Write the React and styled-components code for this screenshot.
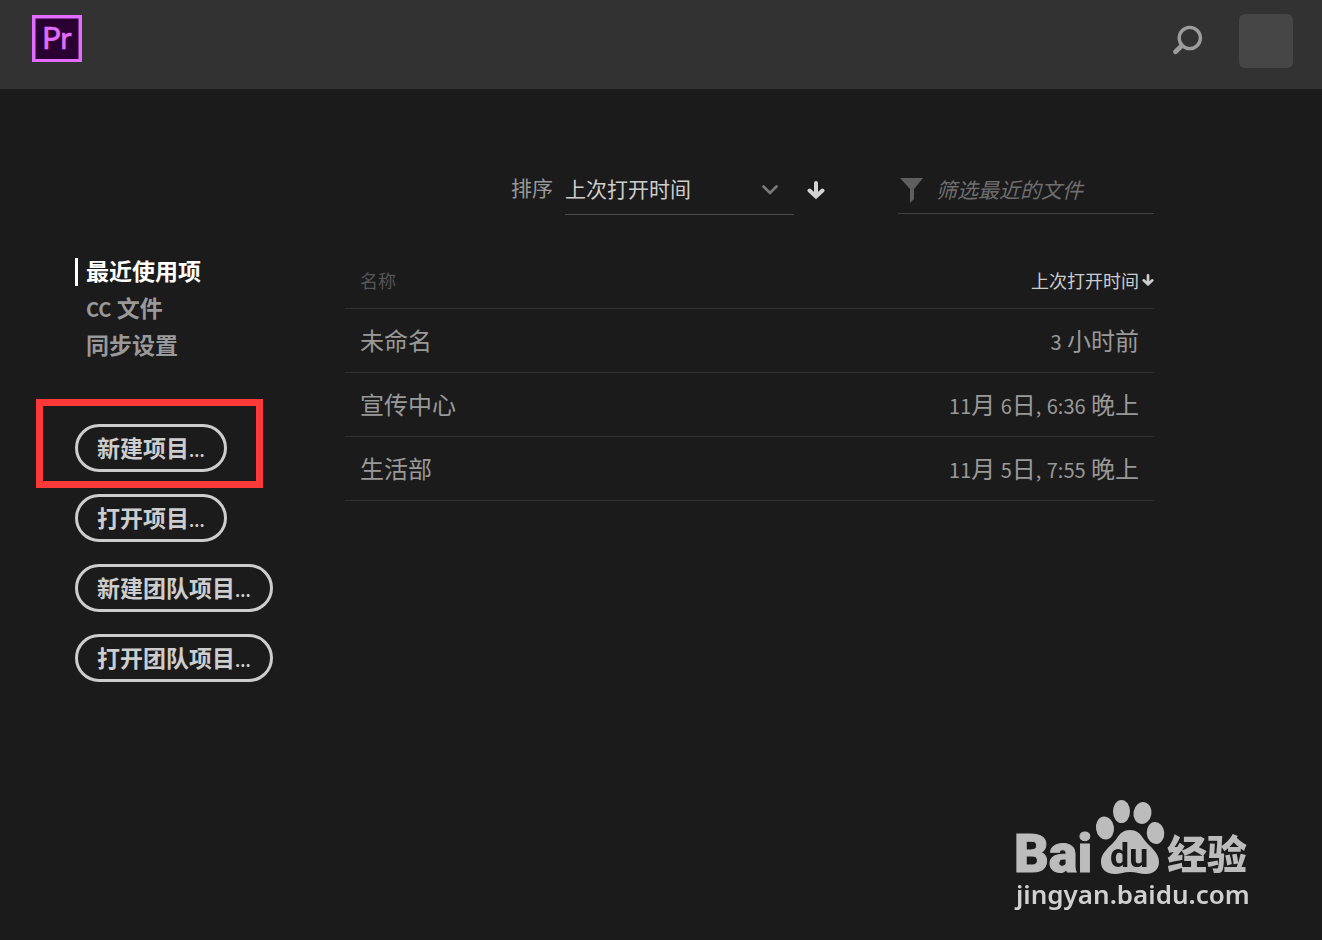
import { useState } from "react";
import styled, { createGlobalStyle, css } from "styled-components";

const recentFiles = [
  { name: "未命名", opened: "3 小时前" },
  { name: "宣传中心", opened: "11月 6日, 6:36 晚上" },
  { name: "生活部", opened: "11月 5日, 7:55 晚上" },
];

const navItems = ["最近使用项", "CC 文件", "同步设置"];

const actions = [
  { label: "新建项目", marked: true },
  { label: "打开项目" },
  { label: "新建团队项目" },
  { label: "打开团队项目" },
];

function ArrowDown({ size }) {
  return (
    <svg width={size} height={size} viewBox="0 0 18 18" aria-hidden="true">
      <path
        d="M9 2v13M2.5 9.5L9 15.5l6.5-6"
        fill="none"
        stroke="currentColor"
        strokeWidth="4"
        strokeLinecap="round"
      />
    </svg>
  );
}

// digits and latin letters are set a bit smaller than the hanzi
function MixedText({ children }) {
  return (
    <span>
      {children
        .split(/([0-9A-Z:,]+)/)
        .map((part, i) => (i % 2 ? <Latin key={i}>{part}</Latin> : part))}
    </span>
  );
}

function Watermark() {
  return (
    <WatermarkBox>
      <svg width="240" height="86" viewBox="-4 0 240 86" role="img">
        <g fill="#bcbcbc">
          <ellipse cx="89" cy="28" rx="9" ry="11.5" transform="rotate(-8 89 28)" />
          <ellipse cx="105.5" cy="11.5" rx="8.5" ry="11.5" />
          <ellipse cx="126.5" cy="13" rx="9" ry="11" transform="rotate(10 126.5 13)" />
          <ellipse cx="139.5" cy="33" rx="8.8" ry="11" transform="rotate(-5 139.5 33)" />
          <path d="M114 30c6 0 10 3 13 8 4 7 16 13 16 24 0 8-6 12-13 12-6 0-10-2-16-2s-10 2-15 2c-8 0-14-4-14-12 0-11 12-17 16-24 3-5 7-8 13-8z" />
          <BaiText x="-2" y="72">
            Bai
          </BaiText>
          <HanziText x="151" y="69">
            经验
          </HanziText>
        </g>
        <DuText x="94" y="67">
          du
        </DuText>
      </svg>
      <SiteName>jingyan.baidu.com</SiteName>
    </WatermarkBox>
  );
}

export default function App() {
  const [current, setCurrent] = useState(navItems[0]);
  const [filter, setFilter] = useState("");

  const files = recentFiles.filter((file) => file.name.includes(filter));

  return (
    <>
      <GlobalStyle />
      <Header>
        <svg width="50" height="47" viewBox="0 0 50 47" role="img">
          <rect width="50" height="47" fill="#e26cff" />
          <rect x="3.5" y="3.5" width="43" height="40.5" fill="#2a0033" />
          <LogoText x="10" y="34">
            Pr
          </LogoText>
        </svg>
        <HeaderTools>
          <IconButton type="button" aria-label="搜索" $color="#9d9d9d">
            <svg width="32" height="32" viewBox="0 0 32 32">
              <circle cx="17.8" cy="13" r="10.6" fill="none" stroke="currentColor" strokeWidth="3.4" />
              <path d="M9.5 21l-6 5.8" stroke="currentColor" strokeWidth="4.8" strokeLinecap="round" />
            </svg>
          </IconButton>
          <Avatar type="button" aria-label="帐户" />
        </HeaderTools>
      </Header>
      <Main>
        <Sidebar>
          <nav>
            {navItems.map((item) => (
              <NavLink
                key={item}
                href="#"
                $active={item === current}
                onClick={() => setCurrent(item)}
              >
                <MixedText>{item}</MixedText>
              </NavLink>
            ))}
          </nav>
          <Actions>
            {actions.map(({ label, marked }) => (
              <ActionItem key={label} $marked={marked}>
                <ActionButton type="button">
                  {label}
                  <Dots>...</Dots>
                </ActionButton>
              </ActionItem>
            ))}
          </Actions>
        </Sidebar>
        <section>
          <Toolbar>
            <SortGroup>
              <SortLabel htmlFor="sort">排序</SortLabel>
              <SelectWrapper>
                <Select id="sort">
                  <option>上次打开时间</option>
                </Select>
                <Chevron width="16" height="10" viewBox="0 0 16 10">
                  <path
                    d="M1.5 1.5L8 8l6.5-6.5"
                    fill="none"
                    stroke="currentColor"
                    strokeWidth="2.6"
                    strokeLinecap="round"
                  />
                </Chevron>
              </SelectWrapper>
              <SortButton type="button" aria-label="降序" $color="#d3d3d3">
                <ArrowDown size={18} />
              </SortButton>
            </SortGroup>
            <FilterField>
              <svg width="26" height="28" viewBox="0 0 26 28" aria-hidden="true">
                <path d="M2 3h23L16 14v10l-4 4V14z" fill="#5f5f5f" />
              </svg>
              <FilterInput
                type="text"
                aria-label="筛选最近的文件"
                placeholder="筛选最近的文件"
                value={filter}
                onChange={(e) => setFilter(e.target.value)}
              />
            </FilterField>
          </Toolbar>
          <Table>
            <thead>
              <tr>
                <HeadCell>名称</HeadCell>
                <HeadCell $sorted>
                  <SortedBy>
                    上次打开时间
                    <ArrowDown size={12} />
                  </SortedBy>
                </HeadCell>
              </tr>
            </thead>
            <tbody>
              {files.map((file) => (
                <tr key={file.name}>
                  <Cell>{file.name}</Cell>
                  <Cell $right>
                    <MixedText>{file.opened}</MixedText>
                  </Cell>
                </tr>
              ))}
            </tbody>
          </Table>
        </section>
      </Main>
      <Watermark />
    </>
  );
}

const GlobalStyle = createGlobalStyle`
  * {
    box-sizing: border-box;
  }
  body {
    margin: 0;
    min-height: 100vh;
    background: #1b1b1b;
    color: #999;
    font-family: "Noto Sans CJK SC", "Noto Sans", sans-serif;
  }
  button, input, select {
    font-family: inherit;
  }
`;

const Header = styled.header`
  display: flex;
  align-items: flex-start;
  justify-content: space-between;
  height: 89px;
  padding: 14px 29px 0 32px;
  background: #323232;

  > svg {
    margin-top: 1px;
  }
`;

const LogoText = styled.text`
  fill: #e26cff;
  stroke: #e26cff;
  stroke-width: 0.6;
  font-family: Lato, sans-serif;
  font-size: 31px;
`;

const HeaderTools = styled.div`
  display: flex;
  align-items: center;
  gap: 35px;
`;

const IconButton = styled.button`
  display: inline-flex;
  padding: 0;
  border: none;
  background: none;
  color: ${({ $color }) => $color};
  cursor: pointer;
`;

const SortButton = styled(IconButton)`
  padding: 0 1px;
`;

const Avatar = styled.button`
  width: 54px;
  height: 54px;
  border: none;
  border-radius: 6px;
  background: #464646;
`;

const Main = styled.main`
  display: grid;
  grid-template-columns: 270px 1fr;
  padding: 76px 168px 0 75px;
`;

const Sidebar = styled.aside`
  padding-top: 88px;
`;

const NavLink = styled.a`
  display: flex;
  align-items: center;
  gap: 8px;
  height: 37px;
  padding-bottom: 3px;
  color: ${({ $active }) => ($active ? "#fff" : "#999")};
  font-size: 23px;
  font-weight: 700;
  line-height: 34px;
  text-decoration: none;

  &::before {
    content: "";
    width: 3px;
    height: 28px;
    margin-top: 3px;
    background: ${({ $active }) => ($active ? "#fff" : "transparent")};
  }
`;

const Actions = styled.ul`
  display: flex;
  flex-direction: column;
  align-items: flex-start;
  gap: 22px;
  margin: 60px 0 0;
  padding: 0;
  list-style: none;
`;

const ActionItem = styled.li`
  position: relative;

  ${({ $marked }) =>
    $marked &&
    css`
      &::after {
        content: "";
        position: absolute;
        inset: -25px -36px -16px -39px;
        border: 7px solid #fc3838;
        pointer-events: none;
      }
    `}
`;

const ActionButton = styled.button`
  display: block;
  height: 48px;
  padding: 0 19px;
  border: 3px solid #cdcdcd;
  border-radius: 24px;
  background: none;
  color: #cdcdcd;
  font-size: 23px;
  font-weight: 700;
  line-height: 38px;
  cursor: pointer;
`;

const Dots = styled.span`
  font-size: 16px;
`;

const Toolbar = styled.div`
  display: flex;
  justify-content: flex-end;
  gap: 72px;
  height: 50px;
`;

const SortGroup = styled.div`
  display: flex;
  align-items: center;
  gap: 12px;
`;

const SortLabel = styled.label`
  padding-bottom: 6px;
  font-size: 21px;
`;

const SelectWrapper = styled.div`
  position: relative;
  width: 229px;
`;

const Select = styled.select`
  appearance: none;
  display: block;
  width: 100%;
  height: 50px;
  padding: 0 0 4px;
  border: none;
  border-bottom: 1px solid #4a4a4a;
  border-radius: 0;
  outline: none;
  background: transparent;
  color: #cdcdcd;
  font-size: 21px;
`;

const Chevron = styled.svg`
  position: absolute;
  top: 20px;
  right: 16px;
  color: #7a7a7a;
  pointer-events: none;
`;

const FilterField = styled.div`
  display: flex;
  align-items: center;
  gap: 12px;
  width: 256px;
  height: 49px;
  border-bottom: 1px solid #424242;
`;

const FilterInput = styled.input`
  flex: 1;
  min-width: 0;
  padding: 0;
  border: none;
  outline: none;
  background: transparent;
  color: #cdcdcd;
  font-size: 21px;
  font-style: italic;

  &::placeholder {
    color: #6e6e6e;
  }
`;

const Table = styled.table`
  width: 100%;
  margin-top: 39px;
  border-spacing: 0;
`;

const HeadCell = styled.th`
  height: 55px;
  padding: ${({ $sorted }) => ($sorted ? "0 0 2px" : "0 15px 2px")};
  border-bottom: 1px solid #303030;
  color: ${({ $sorted }) => ($sorted ? "#cdcdcd" : "#555")};
  font-size: 18px;
  font-weight: 400;
  text-align: left;
`;

const SortedBy = styled.span`
  display: flex;
  align-items: center;
  justify-content: flex-end;
  gap: 3px;
`;

const Cell = styled.td`
  height: 64px;
  padding: 0 15px 2px;
  border-bottom: 1px solid #303030;
  font-size: 24px;
  line-height: 36px;
  text-align: ${({ $right }) => ($right ? "right" : "left")};
`;

const Latin = styled.span`
  font-size: 20px;
  line-height: 1;
`;

const WatermarkBox = styled.div`
  position: fixed;
  right: 70px;
  bottom: 31px;
  display: flex;
  flex-direction: column;
  color: #d0d0d0;
`;

const BaiText = styled.text`
  stroke: #bcbcbc;
  stroke-width: 1;
  font-family: Roboto, sans-serif;
  font-size: 54px;
  font-weight: 900;
`;

const DuText = styled.text`
  fill: #1b1b1b;
  font-family: Roboto, sans-serif;
  font-size: 34px;
  font-weight: 700;
`;

const HanziText = styled.text`
  font-size: 40px;
  font-weight: 900;
`;

const SiteName = styled.span`
  margin-top: -7px;
  padding-left: 4px;
  font-family: "Noto Sans", sans-serif;
  font-size: 26px;
  font-weight: 600;
  line-height: 30px;
`;
